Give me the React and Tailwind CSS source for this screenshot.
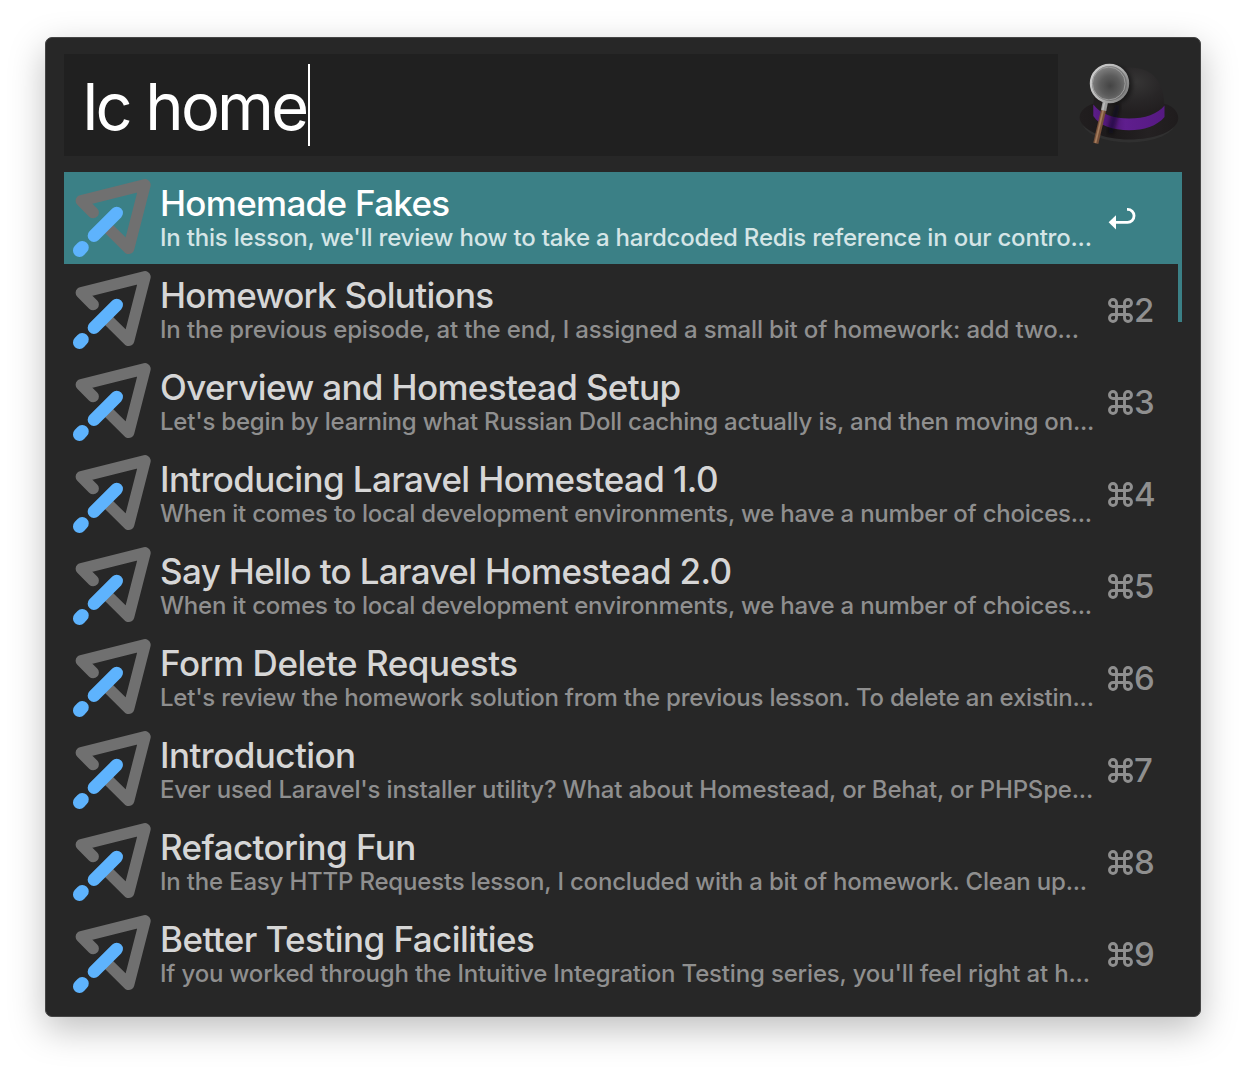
import React from "react";

const lessons = [
  { title: "Homemade Fakes", text: "In this lesson, we'll review how to take a hardcoded Redis reference in our contro...", titleTrack: "tracking-[-0.7px]", textTrack: "tracking-[-0.2px]" },
  { title: "Homework Solutions", text: "In the previous episode, at the end, I assigned a small bit of homework: add two...", titleTrack: "tracking-[-0.71px]", textTrack: "tracking-[-0.165px]" },
  { title: "Overview and Homestead Setup", text: "Let's begin by learning what Russian Doll caching actually is, and then moving on...", titleTrack: "tracking-[-0.66px]", textTrack: "tracking-[-0.21px]" },
  { title: "Introducing Laravel Homestead 1.0", text: "When it comes to local development environments, we have a number of choices...", titleTrack: "tracking-[-0.63px]", textTrack: "tracking-[-0.232px]" },
  { title: "Say Hello to Laravel Homestead 2.0", text: "When it comes to local development environments, we have a number of choices...", titleTrack: "tracking-[-0.65px]", textTrack: "tracking-[-0.232px]" },
  { title: "Form Delete Requests", text: "Let's review the homework solution from the previous lesson. To delete an existin...", titleTrack: "tracking-[-0.46px]", textTrack: "tracking-[-0.23px]" },
  { title: "Introduction", text: "Ever used Laravel's installer utility? What about Homestead, or Behat, or PHPSpe...", titleTrack: "tracking-[-0.56px]", textTrack: "tracking-[-0.18px]" },
  { title: "Refactoring Fun", text: "In the Easy HTTP Requests lesson, I concluded with a bit of homework. Clean up...", titleTrack: "tracking-[-0.6px]", textTrack: "tracking-[-0.194px]" },
  { title: "Better Testing Facilities", text: "If you worked through the Intuitive Integration Testing series, you'll feel right at h...", titleTrack: "tracking-[-0.56px]", textTrack: "tracking-[-0.17px]" },
];

function LaracastsIcon() {
  return (
    <svg width="96" height="92" viewBox="0 0 96 92" fill="none" strokeLinecap="round" strokeLinejoin="round" className="shrink-0">
      <path d="M29.2 40.6 17.300 28.8 81 12.8 64.7 76.4 42 54" stroke="#707070" strokeWidth="11.4" />
      <path d="M52.700 41 29.900 63.700" stroke="#5eb3fd" strokeWidth="12.500" />
      <path d="M18.300 75.400 15.400 78.500" stroke="#5eb3fd" strokeWidth="12.900" />
    </svg>
  );
}

function ReturnIcon() {
  return (
    <svg width="30" height="26" viewBox="0 0 30 26" fill="none" className="ml-[1px]">
      <path d="M7 17.3H19.6a6.4 6.4 0 0 0 0-12.9H19" stroke="#fff" strokeWidth="2.8" />
      <path d="M.6 17.3 8 10.2V24.4Z" fill="#fff" />
    </svg>
  );
}

function CommandIcon() {
  return (
    <svg width="25" height="25" viewBox="0 0 25 25" fill="none" stroke="#8f8f8f" strokeWidth="2.9">
      <path d="M8.5 8.5H16.5V16.5H8.5ZM8.5 8.5H5a3.500 3.500 0 1 1 3.5-3.5ZM16.5 8.5V5A3.500 3.500 0 1 1 20 8.5ZM16.5 16.5H20A3.500 3.500 0 1 1 16.5 20ZM8.5 16.5V20A3.500 3.500 0 1 1 5 16.5Z" />
    </svg>
  );
}

function HatIcon() {
  return (
    <svg width="124" height="102" viewBox="0 0 124 102" fill="none">
      <defs>
        <radialGradient id="crown" cx="0.6" cy="0.28" r="0.6">
          <stop offset="0" stopColor="#363535" />
          <stop offset="0.6" stopColor="#282627" />
          <stop offset="1" stopColor="#221f20" />
        </radialGradient>
        <linearGradient id="brim" x1="0" y1="0" x2="1" y2="0">
          <stop offset="0" stopColor="#211e1f" />
          <stop offset="0.35" stopColor="#1c191a" />
          <stop offset="0.7" stopColor="#242122" />
          <stop offset="1" stopColor="#1f1c1d" />
        </linearGradient>
        <linearGradient id="band" x1="0" y1="0" x2="1" y2="0">
          <stop offset="0" stopColor="#5c1d88" />
          <stop offset="0.25" stopColor="#4d1674" />
          <stop offset="0.45" stopColor="#5f1e8e" />
          <stop offset="1" stopColor="#561a82" />
        </linearGradient>
        <radialGradient id="lens" cx="0.52" cy="0.56" r="0.55">
          <stop offset="0" stopColor="#444" />
          <stop offset="0.5" stopColor="#5c5c5c" />
          <stop offset="1" stopColor="#868686" />
        </radialGradient>
        <linearGradient id="rim" x1="0" y1="0" x2="1" y2="0.6">
          <stop offset="0" stopColor="#d0d0d0" />
          <stop offset="0.6" stopColor="#b5b5b5" />
          <stop offset="1" stopColor="#858585" />
        </linearGradient>
        <filter id="soft" x="-50%" y="-50%" width="200%" height="200%">
          <feGaussianBlur stdDeviation="2" />
        </filter>
      </defs>
      <ellipse cx="71" cy="67" rx="47" ry="21.500" fill="#303030" />
      <path d="M21.500 63C22 56 29 51.500 36 49.500H104C112 50 120 56 120.300 64C120 77 97 85.500 71 85.500C45 85.500 22 76 21.500 63Z" fill="url(#brim)" />
      <path d="M35 55C36 30 43 14 71 13.500C96 13.500 106 29 106.300 52C100 60 85 66 70 66C52 65.500 38 60 35 55Z" fill="url(#crown)" />
      <path d="M35.300 50.500C43 60.500 56 64.500 71 64.500C87 64.500 100 60 106.500 51.500V63C99 72 86 76.200 71 76.200C55 76.200 41 71.500 35.300 62Z" fill="url(#band)" />
      <path d="M60 50 52 80" stroke="#0c0a0d" strokeOpacity="0.5" strokeWidth="6" filter="url(#soft)" />
      <circle cx="55" cy="31" r="19.500" fill="#0c0b0c" fillOpacity="0.45" filter="url(#soft)" />
      <path d="M45.800 55 37.800 89.300" stroke="#765039" strokeWidth="5.200" />
      <path d="M45.200 56 37.400 89" stroke="#a47c5d" strokeWidth="1.800" />
      <path d="M47.400 47.500 45.600 56.500" stroke="#999" strokeWidth="5.400" />
      <path d="M46.500 48 44.800 56" stroke="#bcbcbc" strokeWidth="1.500" />
      <circle cx="51.500" cy="29.500" r="18.600" fill="url(#lens)" stroke="url(#rim)" strokeWidth="2.200" />
      <circle cx="50.800" cy="29.500" r="16.400" stroke="#a0a0a0" strokeWidth="0.900" />
    </svg>
  );
}

function Result({ lesson, index }) {
  const selected = index === 0;
  return (
    <li className={`flex h-[92px] ${selected ? "bg-[#3b8086]" : ""}`}>
      <LaracastsIcon />
      <div className="w-[947px] shrink-0 whitespace-nowrap pt-[13px]">
        <div className={`text-[35px] font-[450] leading-9 ${lesson.titleTrack} ${selected ? "text-white" : "text-[#d6d6d6]"}`}>{lesson.title}</div>
        <div className={`pt-px text-[24px] font-[460] leading-8 ${lesson.textTrack} ${selected ? "text-[#d5e5e6]" : "text-[#8f8f8f]"}`}>{lesson.text}</div>
      </div>
      <div className="flex h-full items-center text-[33px] font-[450] leading-[33px] text-[#8f8f8f]">
        {selected ? (
          <ReturnIcon />
        ) : (
          <span className="flex items-center gap-px pl-px pt-px">
            <CommandIcon />
            <span>{index + 1}</span>
          </span>
        )}
      </div>
    </li>
  );
}

export default function App() {
  return (
    <main className="h-[1070px] w-[1246px] overflow-hidden bg-white px-[45px] pt-[37px] font-['Inter','Liberation_Sans',sans-serif]">
      <div className="h-[980px] w-[1156px] rounded-[7px] border border-[#454545] bg-[#272727] px-[18px] pt-4 shadow-[0_12px_36px_rgba(0,0,0,0.26)]">
        <header className="flex h-[102px]">
          <div className="flex w-[994px] items-center bg-[#202020] pl-[18.500px]">
            <span className="whitespace-pre pt-[3px] text-[65px] font-[370] leading-[99px] tracking-[-2.8px] text-white">lc home</span>
            <span className="ml-[1.500px] h-[82px] w-[2px] bg-white" />
          </div>
          <HatIcon />
        </header>
        <div className="relative mt-4 w-[1118px]">
          <ul>
            {lessons.map((lesson, i) => (
              <Result key={lesson.title} lesson={lesson} index={i} />
            ))}
          </ul>
          <div className="absolute right-0 top-0 h-[150px] w-1 bg-[#3b8086]" />
        </div>
      </div>
    </main>
  );
}
